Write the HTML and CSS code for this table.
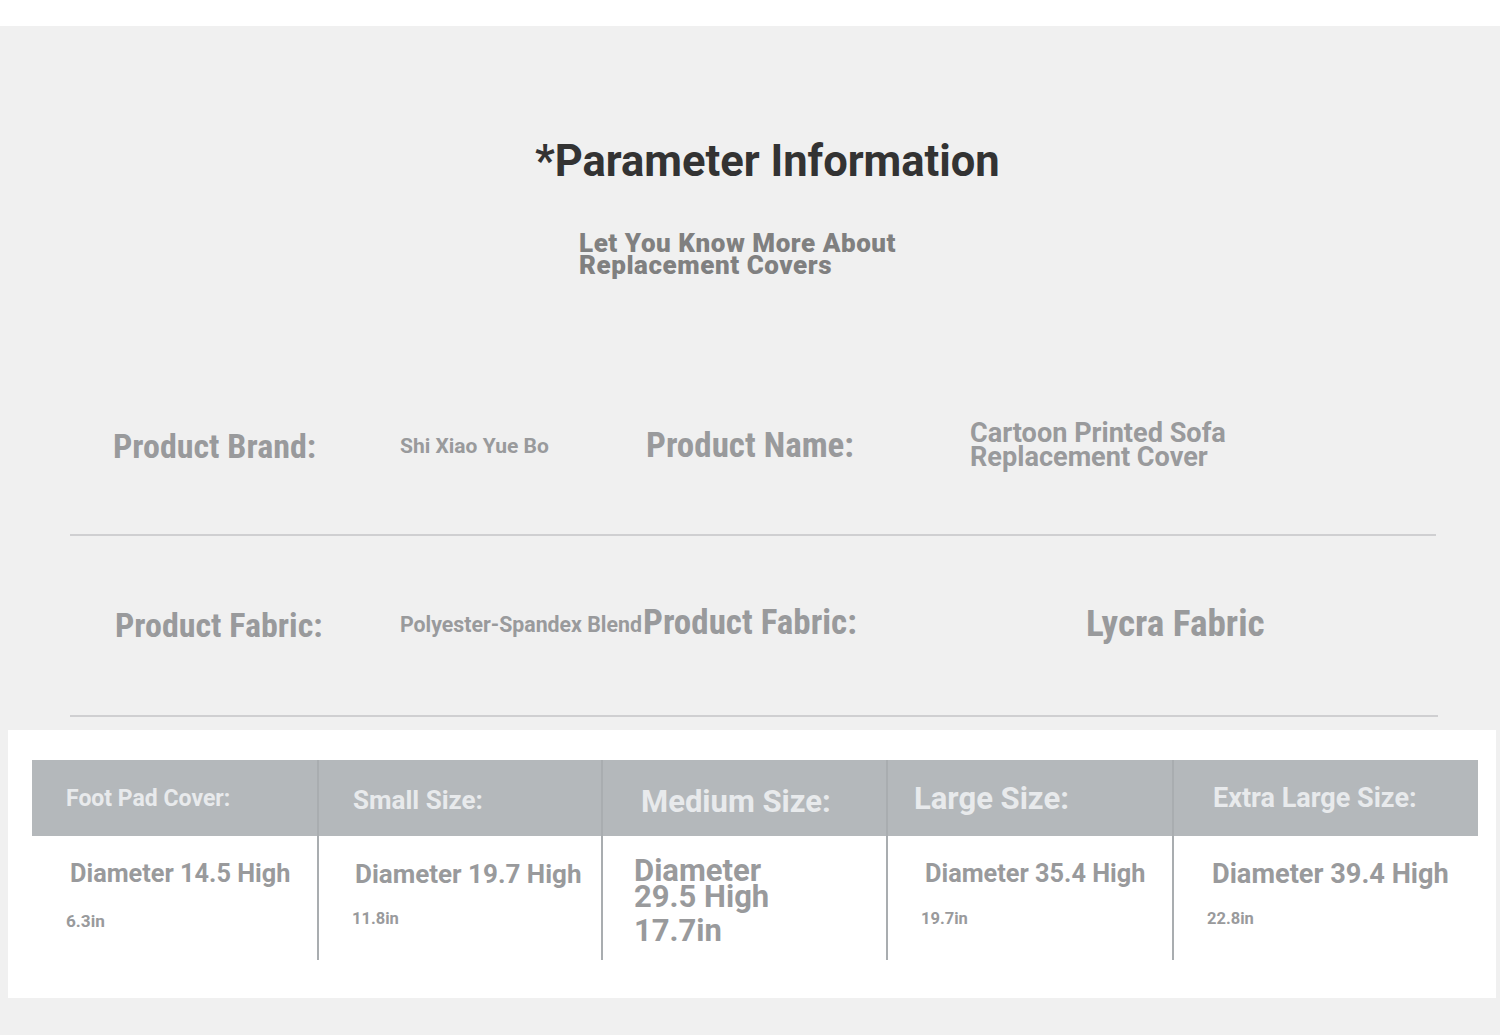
FILE: index.html
```html
<!DOCTYPE html>
<html lang="en">
<head>
<meta charset="utf-8">
<title>Parameter Information</title>
<link rel="stylesheet" href="styles.css">
</head>
<body>
<div class="top-band"></div>
<main class="sheet">
  <section class="intro">
    <h1 class="title">*Parameter Information</h1>
    <p class="subtitle">Let You Know More About<br>Replacement Covers</p>
  </section>

  <section class="param-row row-a">
    <div class="label lbl-brand">Product Brand:</div>
    <div class="value-sm val-brand">Shi Xiao Yue Bo</div>
    <div class="label lbl-name">Product Name:</div>
    <div class="value-md val-name">Cartoon Printed Sofa<br>Replacement Cover</div>
  </section>
  <div class="divider div-a"></div>

  <section class="param-row row-b">
    <div class="label lbl-fabric">Product Fabric:</div>
    <div class="value-sm val-blend">Polyester-Spandex Blend</div>
    <div class="label lbl-fabric2">Product Fabric:</div>
    <div class="value-lg val-lycra">Lycra Fabric</div>
  </section>
  <div class="divider div-b"></div>

  <section class="size-box">
    <div class="size-table">
      <div class="col c1">
        <div class="head h1s">Foot Pad Cover:</div>
        <div class="cell">
          <div class="dim d-normal">Diameter 14.5 High</div>
          <div class="inch">6.3in</div>
        </div>
      </div>
      <div class="col c2">
        <div class="head h2s">Small Size:</div>
        <div class="cell">
          <div class="dim d-normal">Diameter 19.7 High</div>
          <div class="inch">11.8in</div>
        </div>
      </div>
      <div class="col c3">
        <div class="head h3s">Medium Size:</div>
        <div class="cell">
          <div class="dim d-big">Diameter<br>29.5 High</div>
          <div class="inch-big">17.7in</div>
        </div>
      </div>
      <div class="col c4">
        <div class="head h4s">Large Size:</div>
        <div class="cell">
          <div class="dim d-normal">Diameter 35.4 High</div>
          <div class="inch">19.7in</div>
        </div>
      </div>
      <div class="col c5">
        <div class="head h5s">Extra Large Size:</div>
        <div class="cell">
          <div class="dim d-xl">Diameter 39.4 High</div>
          <div class="inch">22.8in</div>
        </div>
      </div>
    </div>
  </section>
</main>
</body>
</html>
```
FILE: styles.css
```css
* { box-sizing: border-box; }
html, body { margin: 0; padding: 0; }
body {
  width: 1500px;
  font-family: Roboto, "Noto Sans", "Liberation Sans", sans-serif;
  font-weight: 700;
  background: #f0f0f0;
}
.top-band { height: 26px; background: #ffffff; }
.sheet {
  background: #f0f0f0;
  padding-bottom: 37px;
}
.intro { padding-top: 111px; }
.title {
  margin: 0;
  padding-left: 535px;
  font-size: 43.5px;
  line-height: 50px;
  font-weight: 700;
  color: #333333;
}
.subtitle {
  margin: 45px 0 0;
  padding-left: 579px;
  font-size: 26px;
  line-height: 22px;
  font-weight: 900;
  color: #808080;
  letter-spacing: 0.55px;
}

.param-row {
  display: grid;
  align-items: center;
  height: 80px;
  color: #999a9c;
}
.row-a {
  margin-top: 130px;
  grid-template-columns: 287px 246px 324px 1fr;
  padding-left: 113px;
}
.row-b {
  margin-top: 49px;
  grid-template-columns: 285px 243px 443px 1fr;
  padding-left: 115px;
}
.label { font-size: 34px; line-height: 36px; white-space: nowrap; font-stretch: 75%; }
.lbl-name { font-size: 35px; }
.lbl-fabric { font-size: 34px; }
.lbl-fabric2 { font-size: 35px; position: relative; top: -2px; }
.value-sm { font-size: 21.3px; line-height: 24px; white-space: nowrap; }
.val-brand { font-size: 21px; }
.value-md { font-size: 27.1px; line-height: 24px; position: relative; top: -1px; }
.value-lg { font-size: 37.2px; line-height: 38px; font-stretch: 75%; }
.val-lycra { position: relative; top: -2px; }

.divider { height: 2px; background: #cfcfd1; }
.div-a { margin: 48px 0 0 70px; width: 1366px; }
.div-b { margin: 50px 0 0 70px; width: 1368px; }

.size-box {
  margin: 13px 0 0 8px;
  width: 1488px;
  height: 268px;
  background: #ffffff;
  padding: 30px 0 0 24px;
}
.size-table {
  display: flex;
  width: 1446px;
  height: 200px;
}
.col { display: flex; flex-direction: column; }
.c1 { width: 285px; }
.c2 { width: 284px; border-left: 2px solid #a9adb0; }
.c3 { width: 285px; border-left: 2px solid #a9adb0; }
.c4 { width: 286px; border-left: 2px solid #a9adb0; }
.c5 { width: 306px; border-left: 2px solid #a9adb0; }
.head {
  height: 76px;
  background: #b4b8bb;
  color: #e8eaec;
  display: flex;
  align-items: center;
  white-space: nowrap;
}
.h1s { padding-left: 34px; font-size: 23px; font-stretch: 97.5%; }
.h2s { padding-left: 34px; font-size: 26px; padding-top: 4px; font-stretch: 98%; }
.h3s { padding-left: 38px; font-size: 31px; padding-top: 6px; }
.h4s { padding-left: 26px; font-size: 31px; font-stretch: 98%; }
.h5s { padding-left: 39px; font-size: 27px; font-stretch: 98.5%; }

.cell {
  flex: 1;
  color: #999a9c;
  padding-top: 23px;
}
.dim { white-space: nowrap; }
.d-normal { font-size: 25.3px; line-height: 30px; }
.d-xl { font-size: 27.2px; line-height: 30px; }
.d-big { font-size: 31px; line-height: 26px; padding-top: 2px; }
.inch { font-size: 16.5px; line-height: 20px; margin-top: 20px; }
.inch-big { font-size: 31px; line-height: 34px; margin-top: 4px; }

.c1 .d-normal { padding-left: 38px; }
.c1 .inch { padding-left: 34px; margin-top: 22px; font-size: 17.2px; }
.c2 .d-normal { padding-left: 36px; font-size: 26px; }
.c2 .inch { padding-left: 33px; }
.c3 .cell { padding-left: 31px; padding-top: 20px; }
.c4 .d-normal { padding-left: 37px; }
.c4 .inch { padding-left: 33px; }
.c5 .d-xl { padding-left: 38px; }
.c5 .inch { padding-left: 33px; }
```
